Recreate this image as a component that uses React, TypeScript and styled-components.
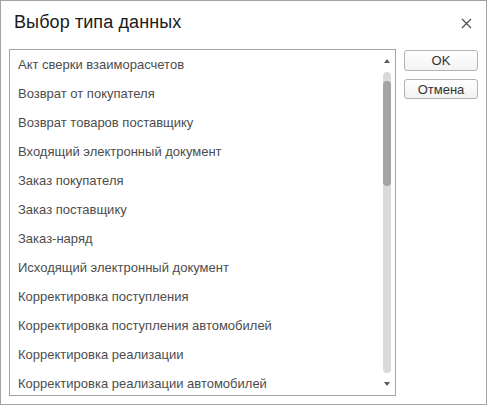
import React from 'react'
import styled, { createGlobalStyle } from 'styled-components'

const GlobalStyle = createGlobalStyle`
    html, body {
        margin: 0;
        padding: 0;
        background: #ffffff;
    }
    body {
        font-family: "Liberation Sans", Arial, sans-serif;
    }
`

const items = [
    'Акт сверки взаиморасчетов',
    'Возврат от покупателя',
    'Возврат товаров поставщику',
    'Входящий электронный документ',
    'Заказ покупателя',
    'Заказ поставщику',
    'Заказ-наряд',
    'Исходящий электронный документ',
    'Корректировка поступления',
    'Корректировка поступления автомобилей',
    'Корректировка реализации',
    'Корректировка реализации автомобилей',
]

const App = () => {
    return (
        <>
            <GlobalStyle />
            <Window>
                <Header>
                    <Title>Выбор типа данных</Title>
                    <CloseButton type="button" aria-label="Закрыть">
                        <svg width="11" height="11" viewBox="0 0 11 11">
                            <path d="M1 1 L10 10 M10 1 L1 10" stroke="#4d4d4d" strokeWidth="1.2" fill="none" />
                        </svg>
                    </CloseButton>
                </Header>
                <Body>
                    <ListBox>
                        <Items>
                            {items.map((item) => (
                                <Row key={item}>{item}</Row>
                            ))}
                        </Items>
                        <ScrollBar>
                            <Arrow $down={false} />
                            <Track>
                                <Thumb />
                            </Track>
                            <Arrow $down={true} />
                        </ScrollBar>
                    </ListBox>
                    <Buttons>
                        <Button type="button" $height={21}>OK</Button>
                        <Button type="button" $height={20}>Отмена</Button>
                    </Buttons>
                </Body>
            </Window>
        </>
    )
}

const Window = styled.div`
    box-sizing: border-box;
    width: 487px;
    height: 405px;
    border: 1px solid #a3a3a3;
    background: #ffffff;
    display: flex;
    flex-direction: column;
`

const Header = styled.div`
    height: 48px;
    display: flex;
    align-items: center;
    justify-content: space-between;
    padding: 0 14px 6px 13px;
    box-sizing: border-box;
`

const Title = styled.div`
    font-size: 18px;
    color: #1a1a1a;
    letter-spacing: 0.1px;
`

const CloseButton = styled.button`
    border: none;
    background: transparent;
    padding: 0;
    width: 11px;
    height: 11px;
    display: flex;
    margin-top: 2px;
`

const Body = styled.div`
    display: flex;
    gap: 8px;
    padding: 0 0 0 8px;
`

const ListBox = styled.div`
    box-sizing: border-box;
    width: 387px;
    height: 347px;
    border: 1px solid #a3a3a3;
    display: flex;
    overflow: hidden;
`

const Items = styled.div`
    flex: 1;
    display: flex;
    flex-direction: column;
    overflow: hidden;
`

const Row = styled.div`
    height: 29px;
    flex-shrink: 0;
    display: flex;
    align-items: center;
    padding-left: 8px;
    font-size: 13px;
    color: #4d4d4d;
    white-space: nowrap;
`

const ScrollBar = styled.div`
    width: 15px;
    display: flex;
    flex-direction: column;
    align-items: center;
    padding-right: 1px;
`

const Arrow = styled.div<{ $down: boolean }>`
    height: 22px;
    width: 8px;
    flex-shrink: 0;
    display: flex;
    align-items: center;
    justify-content: center;
    &::before {
        content: '';
        width: 0;
        height: 0;
        border-left: 3px solid transparent;
        border-right: 3px solid transparent;
        ${({ $down }) => ($down ? 'border-top: 4px solid #5a5a5a;' : 'border-bottom: 4px solid #5a5a5a;')}
    }
`

const Track = styled.div`
    flex: 1;
    width: 8px;
    border-radius: 4px;
    background: #dadada;
    padding-top: 9px;
    box-sizing: border-box;
`

const Thumb = styled.div`
    height: 105px;
    width: 8px;
    border-radius: 4px;
    background: #a4a4a4;
`

const Buttons = styled.div`
    display: flex;
    flex-direction: column;
    gap: 8px;
    padding-top: 1px;
`

const Button = styled.button<{ $height: number }>`
    box-sizing: border-box;
    width: 74px;
    height: ${({ $height }) => $height}px;
    border: 1px solid #b3b3b3;
    border-radius: 3px;
    background: linear-gradient(#ffffff, #f2f2f2);
    font-family: "Liberation Sans", Arial, sans-serif;
    font-size: 13px;
    color: #333333;
    padding: 0;
    display: flex;
    align-items: center;
    justify-content: center;
`

export default App
